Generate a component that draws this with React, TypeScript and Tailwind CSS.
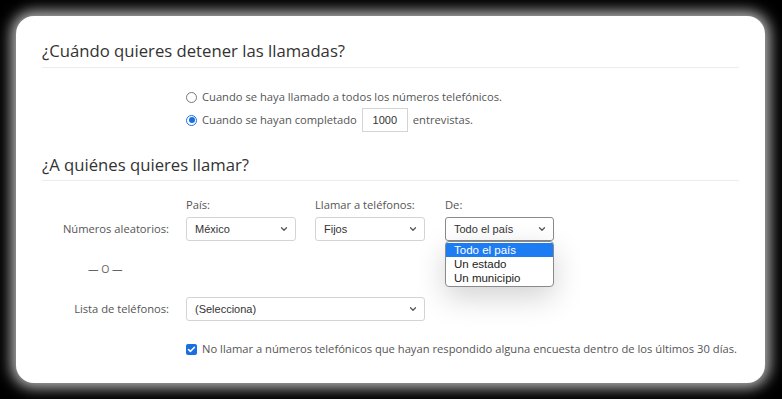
import { ChevronDown, Check } from "lucide-react";

const open = { fontFamily: '"Open Sans", "Noto Sans", sans-serif' };
const arial = { fontFamily: '"Liberation Sans", Arial, sans-serif' };

function Select({ value, w, active }: { value: string; w: string; active?: boolean }) {
  return (
    <div
      className={`${w} flex h-[24px] items-center justify-between rounded-[3px] border bg-white pl-[8px] pr-[6px] text-[11px] text-[#333] ${
        active ? "border-[#8a8a8a]" : "border-[#d4d4d4]"
      }`}
      style={arial}
    >
      <span>{value}</span>
      <ChevronDown className="h-[10px] w-[10px] text-[#555]" strokeWidth={3} />
    </div>
  );
}

export default function App() {
  return (
    <main className="flex h-[399px] w-[782px] bg-black p-[16px] pr-[17px]">
      <div
        className="flex-1 rounded-[18px] bg-white px-[26px] pt-[23px] text-[#555] shadow-[0_0_14px_5px_rgba(255,255,255,0.7)]"
        style={open}
      >
        {/* Cuándo */}
        <h2 className="border-b border-[#ececec] pb-[4px] text-[16.7px] leading-[24px] text-[#333]">
          ¿Cuándo quieres detener las llamadas?
        </h2>
        <div className="mt-[20px] ml-[144px] flex flex-col gap-[2px] text-[11.2px]">
          <label className="flex h-[18px] items-center gap-[5px]">
            <span className="h-[11px] w-[11px] rounded-full border border-[#777] bg-white" />
            Cuando se haya llamado a todos los números telefónicos.
          </label>
          <label className="flex h-[24px] items-center gap-[5px]">
            <span className="flex h-[11px] w-[11px] items-center justify-center rounded-full border border-[#1a6fe0] bg-white">
              <span className="h-[6px] w-[6px] rounded-full bg-[#1a6fe0]" />
            </span>
            Cuando se hayan completado
            <span
              className="flex h-[24px] w-[46px] items-center justify-center border border-[#d4d4d4] text-[11px] text-[#333]"
              style={arial}
            >
              1000
            </span>
            entrevistas.
          </label>
        </div>

        {/* A quiénes */}
        <h2 className="mt-[21px] border-b border-[#ececec] pb-[3px] text-[16.7px] leading-[24px] text-[#333]">
          ¿A quiénes quieres llamar?
        </h2>

        <div className="mt-[16px] grid grid-cols-[127px_auto] gap-x-[17px] text-[11.2px]">
          <div className="flex flex-col">
            <div className="h-[20px]" />
            <div className="flex h-[24px] items-center justify-end">Números aleatorios:</div>
          </div>
          <div className="flex gap-[19px]">
            <div className="flex flex-col">
              <div className="h-[20px] leading-[16px]">País:</div>
              <Select value="México" w="w-[110px]" />
            </div>
            <div className="flex flex-col">
              <div className="h-[20px] leading-[16px]">Llamar a teléfonos:</div>
              <Select value="Fijos" w="w-[110px]" />
            </div>
            <div className="relative ml-[1px] flex flex-col">
              <div className="h-[20px] leading-[16px]">De:</div>
              <Select value="Todo el país" w="w-[109px]" active />
              <div
                className="absolute left-0 top-[44px] z-10 w-[109px] overflow-hidden rounded-[4px] border border-[#8a8a8a] bg-white py-[1px] text-[11.5px] leading-[14px] text-[#222] shadow-[0_10px_30px_rgba(0,0,0,0.18)]"
                style={arial}
              >
                <div className="bg-[#1e7cf2] px-[8px] text-white">Todo el país</div>
                <div className="px-[8px]">Un estado</div>
                <div className="px-[8px]">Un municipio</div>
              </div>
            </div>
          </div>

          <div className="mt-[20px] h-[16px] pl-[46px] text-[10.5px] leading-[16px] text-[#666]">— O —</div>
          <div />

          <div className="mt-[20px] flex h-[24px] items-center justify-end">Lista de teléfonos:</div>
          <div className="mt-[20px]">
            <Select value="(Selecciona)" w="w-[239px]" />
          </div>

          <div />
          <label className="mt-[19px] flex h-[18px] items-center gap-[5px] whitespace-nowrap">
            <span className="flex h-[11px] w-[11px] items-center justify-center rounded-[2px] bg-[#1a6fe0]">
              <Check className="h-[9px] w-[9px] text-white" strokeWidth={4} />
            </span>
            No llamar a números telefónicos que hayan respondido alguna encuesta dentro de los últimos 30 días.
          </label>
        </div>
      </div>
    </main>
  );
}
